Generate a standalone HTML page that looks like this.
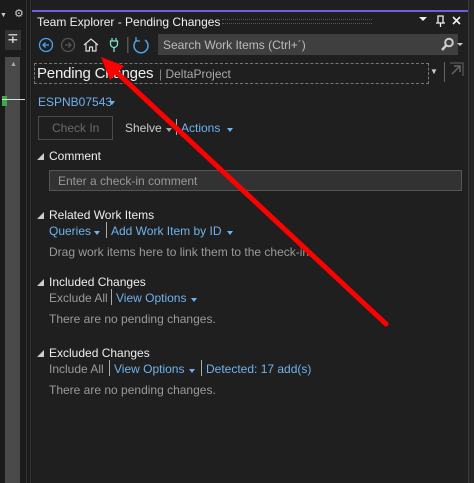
<!DOCTYPE html>
<html><head><style>
body{margin:0;width:474px;height:483px;background:#1f1f1f;position:relative;overflow:hidden;font-family:"Liberation Sans",sans-serif;font-size:12px;color:#dcdcdc}
.a{position:absolute;white-space:nowrap}
.b{color:#6fb3ee}
.g{color:#9a9a9a}
.tri{position:absolute;width:0;height:0;border-left:3px solid transparent;border-right:3px solid transparent;border-top:4px solid #6fb3ee}
.sec{position:absolute;left:37px;width:0;height:0;border-left:7px solid transparent;border-bottom:7px solid #ccc}
.sep{position:absolute;width:1px;height:16px;background:#aaa}
</style></head><body>
<div class="a" style="left:0;top:0;width:32px;height:483px;background:#1b1b1b"></div>
<div class="a" style="left:5px;top:57px;width:15px;height:426px;background:#4a4a4a"></div>
<div class="a" style="left:5px;top:30px;width:16px;height:20px;background:#333"></div>
<div class="a" style="left:7px;top:30px;color:#eee;font-size:14px">∓</div>
<div class="a" style="left:14px;top:7px;color:#ccc;font-size:11px">⚙</div>
<div class="a" style="left:0;top:12px;color:#ccc;font-size:7px">▼</div>
<div class="a" style="left:10px;top:61px;color:#aaa;font-size:7px">▲</div>
<div class="a" style="left:2px;top:96px;width:5px;height:10px;background:#3cab4c"></div>
<div class="a" style="left:2px;top:99px;width:23px;height:1px;background:#ddd"></div>
<div class="a" style="left:26px;top:0;width:1px;height:483px;background:#333"></div>
<div class="a" style="left:30px;top:0;width:1px;height:483px;background:#333"></div>
<div class="a" style="left:468px;top:0;width:6px;height:483px;background:#262626;border-left:1px solid #3a3a3a"></div>
<div class="a" style="left:32px;top:10px;width:436px;height:2px;background:#6e5ee0"></div>
<div class="a" style="left:37px;top:15px;color:#f0f0f0">Team Explorer - Pending Changes</div>
<div class="a" style="left:222px;top:19px;width:150px;height:3px;border-top:1px dotted #555;border-bottom:1px dotted #555"></div>
<svg class="a" style="left:418px;top:14px" width="50" height="14"><path d="M1 3h8l-4 4z" fill="#eee"/><path d="M20 2h5v7h-5zM18 9h9M22.5 9v4" stroke="#eee" fill="none" stroke-width="1.3"/><path d="M35 3l7 7M42 3l-7 7" stroke="#eee" stroke-width="1.6"/></svg>
<svg class="a" style="left:36px;top:35px" width="120" height="20">
<circle cx="10" cy="10" r="6.5" fill="none" stroke="#4aa3f0" stroke-width="1.3"/><path d="M13 10H7M9.5 7.5L7 10l2.5 2.5" stroke="#4aa3f0" fill="none" stroke-width="1.3"/>
<circle cx="32" cy="10" r="6.5" fill="none" stroke="#555" stroke-width="1.3"/><path d="M29 10h6M32.5 7.5L35 10l-2.5 2.5" stroke="#555" fill="none" stroke-width="1.3"/>
<path d="M48 10l7-6 7 6M50 8.5V16h3.5v-4h3v4H60V8.5" stroke="#ddd" fill="none" stroke-width="1.2"/>
<path d="M76 3v3M80 3v3M74.5 6h7v3a3.5 3.5 0 0 1-7 0zM78 12.5V17" stroke="#7fe0d0" fill="none" stroke-width="1.3"/>
<rect x="91" y="2" width="1.5" height="16" fill="#555"/>
<path d="M101 5a7 7 0 1 0 8 0" stroke="#4aa3f0" fill="none" stroke-width="1.5"/><path d="M100 2v4h4" stroke="#4aa3f0" fill="none" stroke-width="1.3"/>
</svg>
<div class="a" style="left:158px;top:34px;width:300px;height:21px;background:#3f3f3f"></div>
<div class="a" style="left:163px;top:38px;color:#bbb">Search Work Items (Ctrl+´)</div>
<svg class="a" style="left:439px;top:37px" width="26" height="16"><circle cx="10" cy="5.5" r="3.8" fill="none" stroke="#ccc" stroke-width="2"/><path d="M7.5 8L3 13" stroke="#ccc" stroke-width="2.5"/><path d="M18 6h6l-3 3z" fill="#ccc"/></svg>
<div class="a" style="left:34px;top:63px;width:393px;height:19px;border:1px dashed #777"></div>
<div class="a" style="left:37px;top:65px;color:#f0f0f0;font-size:15px;letter-spacing:-0.2px">Pending Changes</div>
<div class="a" style="left:159px;top:67px;color:#aaa;font-size:12px"><span style="color:#888">|</span> DeltaProject</div>
<div class="a" style="left:430px;top:67px;color:#ccc;font-size:8px">▼</div>
<div class="a" style="left:444px;top:62px;width:1px;height:20px;background:#666"></div>
<svg class="a" style="left:448px;top:62px" width="16" height="16"><path d="M2 1h13v13" stroke="#666" fill="none"/><path d="M4 12L12 4M6 4h6v6" stroke="#666" fill="none" stroke-width="1.5"/></svg>
<div class="a b" style="left:38px;top:95px">ESPNB07543</div><div class="tri" style="left:109px;top:101px"></div>
<div class="a" style="left:38px;top:116px;width:73px;height:22px;border:1px solid #4a4a4a"></div>
<div class="a" style="left:52px;top:121px;color:#6a6a6a">Check In</div>
<div class="a g" style="left:125px;top:121px;color:#ccc">Shelve</div><div class="tri" style="left:166px;top:128px;border-top-color:#aaa"></div>
<div class="sep" style="left:176px;top:119px"></div>
<div class="a b" style="left:181px;top:121px">Actions</div><div class="tri" style="left:227px;top:128px"></div>
<div class="sec" style="top:153px"></div><div class="a" style="left:49px;top:149px;color:#eee">Comment</div>
<div class="a" style="left:49px;top:170px;width:411px;height:19px;background:#323232;border:1px solid #555"></div>
<div class="a" style="left:58px;top:174px;color:#999">Enter a check-in comment</div>
<div class="sec" style="top:212px"></div><div class="a" style="left:49px;top:208px;color:#eee">Related Work Items</div>
<div class="a b" style="left:49px;top:224px">Queries</div><div class="tri" style="left:94px;top:231px"></div>
<div class="sep" style="left:106px;top:222px"></div>
<div class="a b" style="left:111px;top:224px">Add Work Item by ID</div><div class="tri" style="left:227px;top:231px"></div>
<div class="a g" style="left:49px;top:245px">Drag work items here to link them to the check-in</div>
<div class="sec" style="top:279px"></div><div class="a" style="left:49px;top:275px;color:#eee">Included Changes</div>
<div class="a g" style="left:49px;top:291px">Exclude All</div>
<div class="sep" style="left:111px;top:289px"></div>
<div class="a b" style="left:116px;top:291px">View Options</div><div class="tri" style="left:191px;top:298px"></div>
<div class="a g" style="left:49px;top:312px">There are no pending changes.</div>
<div class="sec" style="top:350px"></div><div class="a" style="left:49px;top:346px;color:#eee">Excluded Changes</div>
<div class="a g" style="left:49px;top:362px">Include All</div>
<div class="sep" style="left:109px;top:360px"></div>
<div class="a b" style="left:114px;top:362px">View Options</div><div class="tri" style="left:189px;top:369px"></div>
<div class="sep" style="left:201px;top:360px"></div>
<div class="a b" style="left:206px;top:362px">Detected: 17 add(s)</div>
<div class="a g" style="left:49px;top:383px">There are no pending changes.</div>
<svg class="a" style="left:0;top:0" width="474" height="483"><path d="M386 324L112 68" stroke="#ff0000" stroke-width="5" stroke-linecap="round"/><path d="M101 57L124 66L110 80Z" fill="#ff0000"/></svg>
</body></html>
